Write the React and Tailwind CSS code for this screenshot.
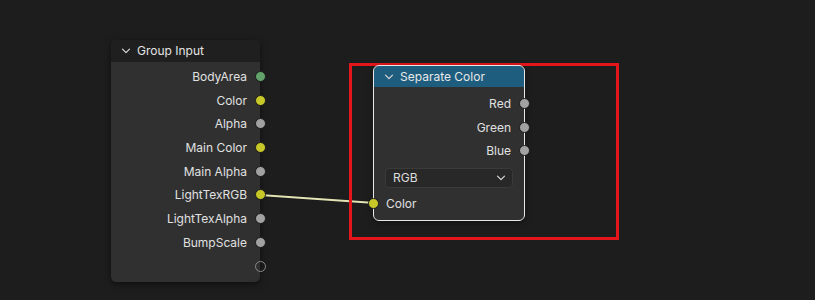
import React from "react";

const font = { fontFamily: "Inter, 'Noto Sans', sans-serif" };

function Chevron({ className = "" }) {
  return (
    <svg width="10" height="10" viewBox="0 0 10 10" className={className}>
      <path d="M1.5 3.2 L5 6.7 L8.5 3.2" fill="none" stroke="#d8d8d8" strokeWidth="1.2" strokeLinecap="round" strokeLinejoin="round" />
    </svg>
  );
}

// one output row with a socket sitting on the right border
function OutRow({ label, color, hollow }) {
  return (
    <div className="relative h-[23.7px] flex items-center justify-end pr-[13px] text-[12px] text-[#e0e0e0]">
      {label}
      <span
        className={`absolute right-[-6px] top-[6px] w-[11px] h-[11px] rounded-full border ${hollow ? "border-[#8a8a8a] bg-transparent" : "border-[#1a1a1a]"}`}
        style={hollow ? {} : { background: color }}
      />
    </div>
  );
}

const groupRows = [
  ["BodyArea", "#63a36b"],
  ["Color", "#c7c729"],
  ["Alpha", "#a1a1a1"],
  ["Main Color", "#c7c729"],
  ["Main Alpha", "#a1a1a1"],
  ["LightTexRGB", "#c7c729"],
  ["LightTexAlpha", "#a1a1a1"],
  ["BumpScale", "#a1a1a1"],
];

export default function App() {
  return (
    <div className="relative w-[815px] h-[300px] bg-[#1d1d1d] overflow-hidden" style={font}>
      {/* link between the two nodes */}
      <svg className="absolute left-0 top-0" width="815" height="300">
        <line x1="260" y1="195" x2="375" y2="203" stroke="#1a1a1a" strokeWidth="3.5" />
        <line x1="260" y1="195" x2="375" y2="203" stroke="#e3e3b4" strokeWidth="1.8" />
      </svg>

      {/* Group Input node */}
      <div className="absolute left-[111px] top-[40px] w-[149px] h-[242px] rounded-[5px] bg-[#303030] shadow-[0_2px_6px_rgba(0,0,0,0.5)]">
        <div className="h-[22px] rounded-t-[5px] bg-[#1f1f1f] flex items-center gap-[6px] pl-[10px] text-[12px] text-[#e4e4e4]">
          <Chevron />
          <span>Group Input</span>
        </div>
        <div className="pt-[3px]">
          {groupRows.map(([l, c]) => (
            <OutRow key={l} label={l} color={c} />
          ))}
          <OutRow label="" hollow />
        </div>
      </div>

      {/* highlight frame */}
      <div className="absolute left-[349px] top-[63px] w-[270px] h-[177px] border-[3px] border-[#e3161c]" />

      {/* Separate Color node (selected) */}
      <div className="absolute left-[374px] top-[66px] w-[150px] h-[154px] rounded-[5px] bg-[#303030] outline outline-1 outline-[#e8e8e8] shadow-[0_2px_6px_rgba(0,0,0,0.5)]">
        <div className="h-[21px] rounded-t-[5px] bg-[#1f5d7e] flex items-center gap-[6px] pl-[10px] text-[12px] text-[#e8e8e8]">
          <Chevron />
          <span>Separate Color</span>
        </div>
        <div className="pt-[5px]">
          <OutRow label="Red" color="#a1a1a1" />
          <OutRow label="Green" color="#a1a1a1" />
          <OutRow label="Blue" color="#a1a1a1" />
        </div>
        <div className="mx-[11px] mt-[5px] h-[20px] rounded-[4px] bg-[#282828] border border-[#3a3a3a] flex items-center justify-between pl-[7px] pr-[6px] text-[12px] text-[#dedede]">
          <span>RGB</span>
          <Chevron />
        </div>
        <div className="relative h-[24px] mt-[4px] flex items-center pl-[12px] text-[12px] text-[#e0e0e0]">
          Color
          <span className="absolute left-[-6px] top-[6px] w-[11px] h-[11px] rounded-full border border-[#1a1a1a] bg-[#c7c729]" />
        </div>
      </div>
    </div>
  );
}
